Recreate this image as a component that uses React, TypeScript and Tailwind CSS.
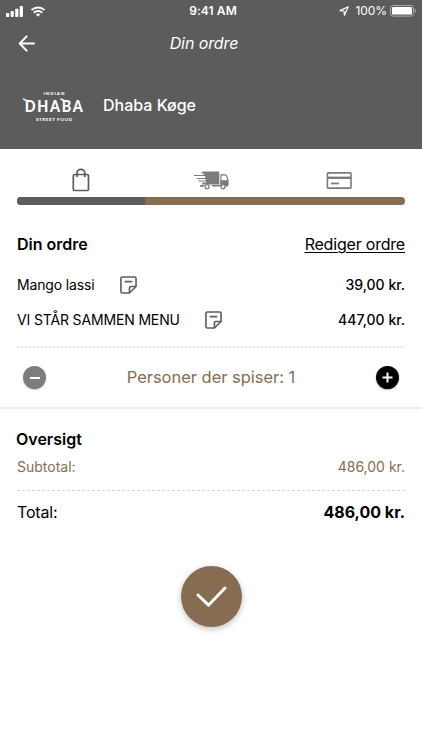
import React, { useState } from 'react';

interface OrderItem {
  id: number;
  name: string;
  price: number;
  nameClass: string;
}

const ITEMS: OrderItem[] = [
  { id: 1, name: 'Mango lassi', price: 39, nameClass: 'w-[78px]' },
  { id: 2, name: 'VI STÅR SAMMEN MENU', price: 447, nameClass: 'w-[163px]' },
];

const formatPrice = (value: number) => `${value},00 kr.`;

// ======================================================
// ICONS
// ======================================================

const SignalIcon = () => (
  <svg width="17" height="11" viewBox="0 0 17 11" fill="#fff">
    <rect x="0" y="7" width="3.2" height="4" rx="0.8" />
    <rect x="4.6" y="5" width="3.2" height="6" rx="0.8" />
    <rect x="9.2" y="2.7" width="3.2" height="8.3" rx="0.8" />
    <rect x="13.7" y="0" width="3.2" height="11" rx="0.8" />
  </svg>
);

const WifiIcon = () => (
  <svg width="14" height="11" viewBox="0 0 14 11" fill="none" stroke="#fff" strokeWidth="2">
    <path d="M0.5 4.1a9.2 9.2 0 0 1 13 0" />
    <path d="M2.8 6.8a6 6 0 0 1 8.4 0" />
    <path d="M7 10.8 4.8 8.6a3.1 3.1 0 0 1 4.4 0Z" fill="#fff" stroke="none" />
  </svg>
);

const LocationIcon = () => (
  <svg width="10" height="10" viewBox="0 0 10 10" fill="none" stroke="#fff" strokeWidth="1.2" strokeLinejoin="round">
    <path d="M9.2 0.8 0.9 4.6 5 5l0.4 4.2Z" />
  </svg>
);

const BatteryIcon = () => (
  <svg width="27" height="12" viewBox="0 0 27 12" fill="none">
    <rect x="0.5" y="0.5" width="23" height="10.6" rx="2.4" stroke="#a9a9a9" />
    <rect x="2" y="2" width="20" height="7.6" rx="1.2" fill="#fff" />
    <path d="M24.7 3.8v4c1-.4 1.5-1.1 1.5-2s-.5-1.6-1.5-2Z" fill="#a0a0a0" />
  </svg>
);

const BackIcon = () => (
  <svg width="17" height="17" viewBox="0 0 17 17" fill="none" stroke="#fff" strokeWidth="2" strokeLinecap="round" strokeLinejoin="round">
    <path d="M16 8.5H1.9M8.6 1.4 1.8 8.5l6.8 7.1" />
  </svg>
);

const BagIcon = () => (
  <svg width="18" height="24" viewBox="0 0 18 24" fill="none" stroke="#5c5c5c" strokeWidth="1.7">
    <rect x="1.3" y="6.5" width="15.2" height="16" rx="1.2" />
    <path d="M5 9V5.2a3.9 3.9 0 0 1 7.8 0V9" />
  </svg>
);

const TruckIcon = () => (
  <svg width="35" height="19" viewBox="0 0 36 19" preserveAspectRatio="none">
    <path d="M9 0.5h17v13H8.5v-2h4v-1H4.5V9.600H12V8H3V7h8.5V5H0V3.9h10V2.5H7Z" fill="#7b7b7b" />
    <path d="M27.7 3.9h4.2c1 0 1.5.4 1.8 1.3l1.3 4v4.3h-7.3Z" fill="none" stroke="#7b7b7b" strokeWidth="1.2" />
    <path d="M27.2 9.3H35V15.600h-2.2a3 3 0 0 0-5.8 0h-8.5V14h8.7ZM6.5 14h4l-1 1.9h-3Z" fill="#7b7b7b" />
    <circle cx="13.5" cy="15.7" r="2.1" fill="#fff" stroke="#7b7b7b" strokeWidth="1.3" />
    <circle cx="29.9" cy="15.7" r="2.1" fill="#fff" stroke="#7b7b7b" strokeWidth="1.3" />
  </svg>
);

const CardIcon = () => (
  <svg width="26" height="17" viewBox="0 0 26 17" fill="none" stroke="#7b7b7b">
    <rect x="1.4" y="0.9" width="23.6" height="15.2" rx="0.8" strokeWidth="1.6" />
    <path d="M1.4 5.8H25" strokeWidth="2.4" />
    <path d="M5 11.5h8" strokeWidth="1.7" />
  </svg>
);

const NoteIcon = () => (
  <svg width="17" height="18" viewBox="0 0 18 18" preserveAspectRatio="none" fill="none" stroke="#5c5c5c" strokeWidth="1.7" strokeLinejoin="round">
    <path d="M10 17H2.5A1.5 1.5 0 0 1 1 15.5v-13A1.5 1.5 0 0 1 2.5 1h13A1.5 1.5 0 0 1 17 2.5V10.5Z" />
    <path d="M10 17v-5a1.5 1.5 0 0 1 1.5-1.5H17M5 5.7h8" />
  </svg>
);

// ======================================================
// SCREEN PARTS
// ======================================================

const Logo = () => (
  <div className="relative flex w-[62px] flex-col items-center whitespace-nowrap font-['Lato'] text-white">
    <span className="mt-[1px] -mr-[0.9px] h-[6px] text-[4.5px] font-black leading-[6px] tracking-[0.9px]">INDIAN</span>
    <span className="-mr-[1px] h-[17px] origin-center scale-x-[0.84] text-[17px] font-black leading-[17px] tracking-[2px]">DHABA</span>
    <span className="mt-[2px] -mr-[0.6px] h-[7px] text-[4.5px] font-black leading-[7px] tracking-[0.6px]">STREET FOOD</span>
    {/* serif spurs on the D and the B */}
    <svg className="absolute left-0 top-[8px]" width="62" height="6" viewBox="0 0 62 6" fill="none" stroke="#fff" strokeWidth="1.5">
      <path d="M0 1 3.5 2.500M37.500 1 41 2.500" />
    </svg>
  </div>
);

const Header = () => (
  <header className="h-[149px] bg-[#5c5c5c] text-white">
    <div className="grid h-[22px] grid-cols-3 items-center pl-[6px] pr-[5px]">
      <div className="flex items-center gap-[8px]">
        <SignalIcon />
        <WifiIcon />
      </div>
      <span className="pl-[3px] text-center text-[12px] font-semibold leading-[22px] tracking-[0.1px]">9:41 AM</span>
      <div className="flex items-center justify-end">
        <LocationIcon />
        <span className="ml-[6px] mr-[3px] text-[12px] tracking-[-0.05px]">100%</span>
        <BatteryIcon />
      </div>
    </div>
    <div className="grid h-[42px] grid-cols-3 items-center px-[18px]">
      <button className="w-[17px]">
        <BackIcon />
      </button>
      <h1 className="-ml-[14px] text-center text-[16px] italic tracking-[-0.1px]">Din ordre</h1>
    </div>
    <div className="flex h-[85px] items-center pl-[23px]">
      <Logo />
      <h2 className="-mt-[4px] ml-[18px] text-[16px] font-medium">Dhaba Køge</h2>
    </div>
  </header>
);

const Steps = () => (
  <div className="px-[17px]">
    <div className="flex h-[48px] items-center justify-between pl-[55px] pr-[53px] pt-[14px]">
      <BagIcon />
      <span className="ml-[6px]">
        <TruckIcon />
      </span>
      <CardIcon />
    </div>
    <div className="h-[8px] overflow-hidden rounded-full bg-[#866d52]">
      <div className="h-full w-[128px] bg-[#5c5c5c]" />
    </div>
  </div>
);

export default function App() {
  const [persons, setPersons] = useState(1);
  const total = ITEMS.reduce((sum, item) => sum + item.price, 0);

  return (
    <div className="h-[750px] w-[422px] overflow-hidden bg-white font-['Inter',sans-serif] text-black">
      <Header />
      <Steps />

      {/* Order lines */}
      <section className="px-[17px] pt-[19px]">
        <div className="flex h-[43px] items-start justify-between text-[16px] leading-[40px]">
          <h3 className="font-semibold">Din ordre</h3>
          <button className="tracking-[-0.2px] underline decoration-1 underline-offset-2">Rediger ordre</button>
        </div>
        {ITEMS.map((item) => (
          <div key={item.id} className="flex h-[35px] items-center text-[14px]">
            <span className={`whitespace-nowrap tracking-[-0.15px] ${item.nameClass}`}>{item.name}</span>
            <span className="ml-[25px]">
              <NoteIcon />
            </span>
            <span className="ml-auto font-medium">{formatPrice(item.price)}</span>
          </div>
        ))}
        <div className="mt-[9px] h-[2px] bg-[repeating-linear-gradient(90deg,#e6e6e6_0_2px,transparent_2px_4px)]" />
      </section>

      {/* Person counter */}
      <div className="flex h-[59px] items-center justify-between px-[23px]">
        <button
          onClick={() => setPersons(Math.max(1, persons - 1))}
          className="flex h-[23px] w-[23px] items-center justify-center rounded-full bg-[#7d7d7d] shadow-[0_1px_2px_rgba(0,0,0,0.2)]"
        >
          <span className="h-[2px] w-[10px] bg-white" />
        </button>
        <span className="text-[16.5px] tracking-[-0.03px] text-[#866d52]">Personer der spiser: {persons}</span>
        <button
          onClick={() => setPersons(persons + 1)}
          className="flex h-[23px] w-[23px] items-center justify-center rounded-full bg-black shadow-[0_1px_2px_rgba(0,0,0,0.3)]"
        >
          <svg width="11" height="11" viewBox="0 0 11 11" stroke="#fff" strokeWidth="2">
            <path d="M5.5 0.5v10M0.5 5.5h10" />
          </svg>
        </button>
      </div>
      <div className="h-[2px] bg-[#ececfa]" />

      {/* Summary */}
      <section className="px-[17px] pt-[18px]">
        <h3 className="-ml-px h-[24px] text-[16px] font-semibold leading-[24px]">Oversigt</h3>
        <div className="flex h-[32px] justify-between text-[14px] leading-[32px] text-[#866d52]">
          <span>Subtotal:</span>
          <span>{formatPrice(total)}</span>
        </div>
        <div className="mt-[7px] h-px bg-[repeating-linear-gradient(90deg,#d8d8d8_0_3px,transparent_3px_5px)]" />
        <div className="flex h-[44px] justify-between text-[16px] leading-[42px]">
          <span className="tracking-[-0.15px]">Total:</span>
          <span className="font-bold">{formatPrice(total)}</span>
        </div>
      </section>

      <div className="mt-[31px] flex justify-center">
        <button className="flex h-[61px] w-[61px] items-center justify-center rounded-full bg-[#866d52] shadow-[0_2px_6px_rgba(0,0,0,0.25)]">
          <svg width="31" height="21" viewBox="0 0 31 21" fill="none" stroke="#fff" strokeWidth="3" strokeLinecap="round">
            <path d="m2 9 10.5 10.2L29 2" />
          </svg>
        </button>
      </div>
    </div>
  );
}
